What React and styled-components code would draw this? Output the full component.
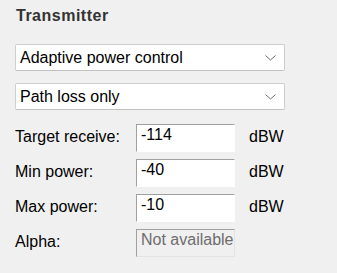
import React from 'react'
import styled, { createGlobalStyle } from 'styled-components'

const GlobalStyle = createGlobalStyle`
  html, body {
    margin: 0;
    padding: 0;
    background: #f0f0f0;
  }
  body {
    font-family: "Liberation Sans", Arial, sans-serif;
  }
`;

const Panel = styled.div`
  width: 337px;
  height: 273px;
  box-sizing: border-box;
  padding: 7px 0 0 15px;
  background: #f0f0f0;
  color: #000;
  font-size: 16px;
`;

const Title = styled.h3`
  margin: 0 0 19px 1px;
  font-size: 16px;
  line-height: 18px;
  font-weight: bold;
  letter-spacing: 0.5px;
  color: #333;
`;

const Select = styled.div`
  width: 270px;
  height: 27px;
  box-sizing: border-box;
  display: flex;
  align-items: center;
  justify-content: space-between;
  padding: 0 8px 0 4px;
  margin-bottom: ${p => p.$gap || 0}px;
  background: #fff;
  border: 1px solid #cfcfcf;
  border-bottom-color: #c2c2c2;
  border-radius: 2px;
  line-height: 18px;
`;

const Chevron = () => (
  <svg width="11" height="6" viewBox="0 0 11 6">
    <path d="M0.5 0.5 L5.5 5 L10.5 0.5" fill="none" stroke="#6b6b6b" strokeWidth="1" />
  </svg>
);

const Form = styled.div`
  display: grid;
  grid-template-columns: 121px 99px auto;
  row-gap: 7px;
  align-items: center;
  margin-top: 14px;
`;

const Label = styled.div`
  line-height: 18px;
  margin-top: -2px;
`;

const Field = styled.div`
  height: 28px;
  box-sizing: border-box;
  padding: 1px 3px 0 4px;
  line-height: 18px;
  white-space: nowrap;
  overflow: hidden;
  border: 1px solid ${p => (p.$disabled ? '#e3e3e3' : '#ffffff')};
  border-top-color: #a0a0a0;
  border-left-color: #a0a0a0;
  background: ${p => (p.$disabled ? '#f0f0f0' : '#fff')};
  color: ${p => (p.$disabled ? '#6d6d6d' : '#000')};
`;

const Unit = styled.div`
  margin-left: 14px;
  margin-top: -2px;
  line-height: 18px;
`;

const rows = [
  { label: 'Target receive:', value: '-114', unit: 'dBW' },
  { label: 'Min power:', value: '-40', unit: 'dBW' },
  { label: 'Max power:', value: '-10', unit: 'dBW' },
  { label: 'Alpha:', value: 'Not available', disabled: true },
];

export default function App() {
  return (
    <Panel>
      <GlobalStyle />
      <Title>Transmitter</Title>
      <Select $gap={12}>
        <span>Adaptive power control</span>
        <Chevron />
      </Select>
      <Select>
        <span>Path loss only</span>
        <Chevron />
      </Select>
      <Form>
        {rows.map(r => (
          <React.Fragment key={r.label}>
            <Label>{r.label}</Label>
            <Field $disabled={r.disabled}>{r.value}</Field>
            <Unit>{r.unit}</Unit>
          </React.Fragment>
        ))}
      </Form>
    </Panel>
  );
}
